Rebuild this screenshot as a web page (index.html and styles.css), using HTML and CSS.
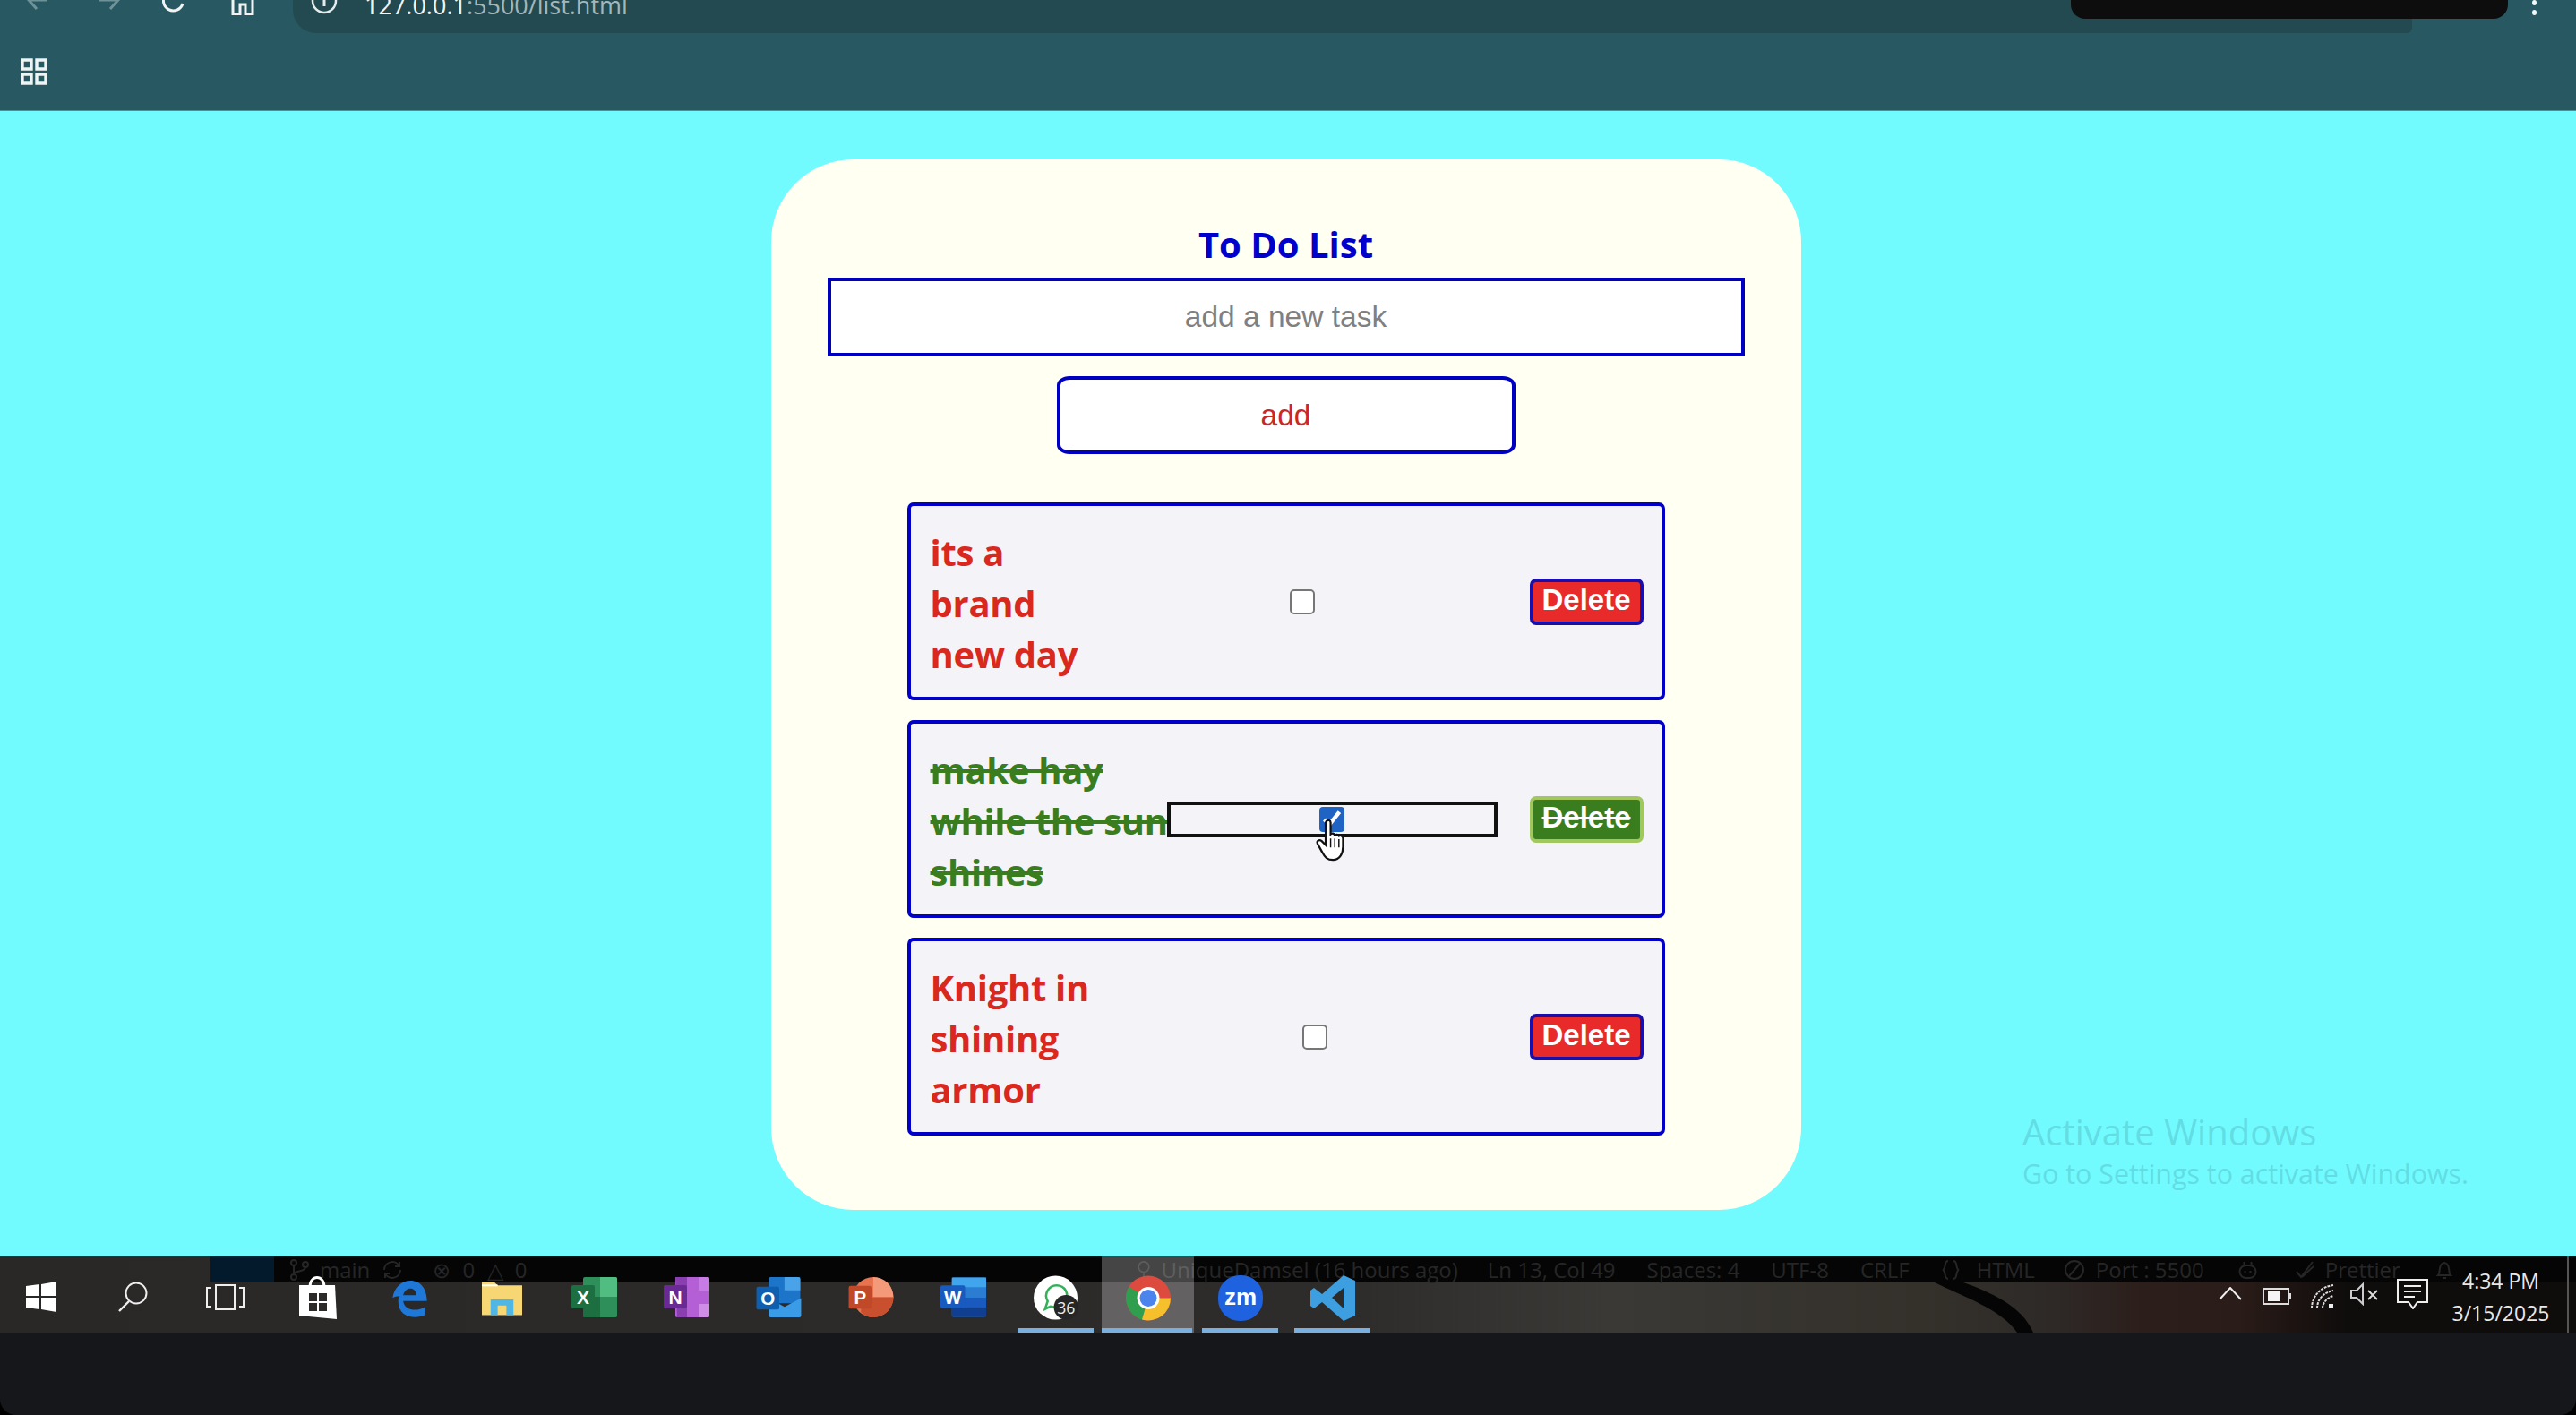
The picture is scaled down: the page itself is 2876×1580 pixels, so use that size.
FILE: index.html
```html
<!DOCTYPE html>
<html lang="en">
<head>
    <meta charset="UTF-8">
    <title>To Do List</title>
    <link rel="stylesheet" href="styles.css">
</head>
<body>
    <!-- Browser chrome, cut off at the top of the recording -->
    <header class="browser">
        <div class="toolbar">
            <svg class="nav-icon back" viewBox="0 0 26 30"><path d="M24 15H3M12 5L3 15l9 10" fill="none" stroke="#6f9298" stroke-width="3"/></svg>
            <svg class="nav-icon forward" viewBox="0 0 26 30"><path d="M2 15h21M14 5l9 10-9 10" fill="none" stroke="#6f9298" stroke-width="3"/></svg>
            <svg class="nav-icon reload" viewBox="0 0 26 30"><path d="M23 19a11 11 0 1 1-2-10" fill="none" stroke="#f0f4f4" stroke-width="3"/></svg>
            <svg class="nav-icon home" viewBox="0 0 26 30"><path d="M2 29V12L13 2l11 10v17h-8V18h-6v11z" fill="none" stroke="#f0f4f4" stroke-width="3"/></svg>
            <div class="address">
                <svg class="info" viewBox="0 0 30 30"><circle cx="15" cy="15" r="13" fill="none" stroke="#e4ecec" stroke-width="2.5"/><path d="M15 8v13" stroke="#e4ecec" stroke-width="3"/></svg>
                <span class="url">127.0.0.1<span class="url-dim">:5500/list.html</span></span>
            </div>
        </div>
        <div class="recording-pill"></div>
        <div class="menu-dots"><i></i><i></i></div>
        <div class="bookmarks">
            <svg class="apps" viewBox="0 0 30 30"><path d="M2 2h10v10H2zM18 2h10v10H18zM2 18h10v10H2zM18 18h10v10H18z" fill="none" stroke="#eef4f4" stroke-width="3.4"/></svg>
        </div>
    </header>

    <main class="page">
        <section class="card">
            <h2 class="title">To Do List</h2>
            <input class="new-task" type="text" placeholder="add a new task">
            <button class="add-btn">add</button>
            <ul class="tasks">
                <li class="task">
                    <span class="task-text">its a brand new day</span>
                    <input class="task-check" type="checkbox">
                    <button class="delete-btn">Delete</button>
                </li>
                <li class="task done">
                    <span class="task-text">make hay while the sun shines</span>
                    <input class="task-check focused" type="checkbox" checked>
                    <button class="delete-btn">Delete</button>
                    <svg class="cursor" viewBox="0 0 40 52"><path d="M14 3c2-2 5-1 5 2v14c2-2 4-1 5 1 2-1 4-1 5 1 2-1 5 0 5 3v10c0 8-4 16-12 16-7 0-10-3-13-9L3 30c-1-3 2-5 5-3l5 5V5z" fill="#fff" stroke="#111" stroke-width="2.4"/><path d="M19 24v11M24 24v11M29 25v10" stroke="#111" stroke-width="1.6"/></svg>
                </li>
                <li class="task">
                    <span class="task-text">Knight in shining armor</span>
                    <input class="task-check" type="checkbox">
                    <button class="delete-btn">Delete</button>
                </li>
            </ul>
        </section>
        <div class="activate">
            <div class="activate-big">Activate Windows</div>
            <div class="activate-small">Go to Settings to activate Windows.</div>
        </div>
    </main>

    <footer class="taskbar">
        <!-- wallpaper stroke behind the glass -->
        <svg class="wallpaper" viewBox="0 0 2876 85"><path d="M2160 29c30 15 75 30 92 56h18c-12-30-50-46-78-56z" fill="#050505"/></svg>
        <!-- VS Code status bar showing through the taskbar -->
        <div class="status-line">
            <span class="status-remote"></span>
            <svg class="st-ico st-branch" viewBox="0 0 24 24"><circle cx="6" cy="4" r="3"/><circle cx="6" cy="20" r="3"/><circle cx="19" cy="6" r="3"/><path d="M6 7v10M19 9c0 6-13 3-13 8"/></svg>
            <span class="st-main">main</span>
            <svg class="st-ico st-sync" viewBox="0 0 24 24"><path d="M21 12a9 9 0 0 1-17 4M3 12a9 9 0 0 1 17-4M20 3v5h-5M4 21v-5h5"/></svg>
            <span class="st-errors">&#8855; 0 &#9651; 0</span>
            <svg class="st-ico st-pin" viewBox="0 0 24 24"><circle cx="12" cy="8" r="7"/><path d="M12 15v8"/></svg>
            <span class="st-blame">UniqueDamsel (16 hours ago)</span>
            <span class="st-ln">Ln 13, Col 49</span>
            <span class="st-item">Spaces: 4</span>
            <span class="st-item">UTF-8</span>
            <span class="st-item">CRLF</span>
            <svg class="st-ico st-braces" viewBox="0 0 24 24"><path d="M9 2c-5 0-2 9-6 10 4 1 1 10 6 10M15 2c5 0 2 9 6 10-4 1-1 10-6 10"/></svg>
            <span class="st-html">HTML</span>
            <svg class="st-ico st-noport" viewBox="0 0 24 24"><circle cx="12" cy="12" r="10"/><path d="M6 19L18 5"/></svg>
            <span class="st-port">Port : 5500</span>
            <svg class="st-ico st-robot" viewBox="0 0 24 24"><rect x="3" y="7" width="18" height="14" rx="7"/><path d="M8 3v4M16 3v4M9 13v2M15 13v2"/></svg>
            <svg class="st-ico st-check" viewBox="0 0 24 24"><path d="M3 14l5 6L21 3M9 20L22 8"/></svg>
            <span class="st-prettier">Prettier</span>
            <svg class="st-ico st-bell" viewBox="0 0 24 24"><path d="M5 18c3-3 0-13 7-14 7 1 4 11 7 14zM10 21h4"/></svg>
        </div>
        <div class="slots">
            <div class="slot slot-start">
                <svg class="ico-start" viewBox="0 0 34 34"><path d="M0 5l15-2v13H0zM17 3l17-3v16H17zM0 18h15v13L0 29zM17 18h17v16l-17-3z" fill="#fff"/></svg>
            </div>
            <div class="slot">
                <svg class="ico-search" viewBox="0 0 35 34"><circle cx="21" cy="13" r="11.5" fill="none" stroke="#eee" stroke-width="2"/><path d="M13 22L2 33" stroke="#eee" stroke-width="2.4"/></svg>
            </div>
            <div class="slot">
                <svg class="ico-view" viewBox="0 0 43 29"><path d="M11 1h21v27H11z" fill="none" stroke="#eee" stroke-width="2"/><path d="M6 4H1v21h5M37 4h5v21h-5" fill="none" stroke="#eee" stroke-width="2"/></svg>
            </div>
            <div class="slot">
                <svg class="ico-store" viewBox="0 0 44 49"><path d="M13 12c0-14 16-14 16 0" fill="none" stroke="#fff" stroke-width="3"/><path d="M1 10h40l2 38L1 44z" fill="#fff"/><path d="M12 19h9v9h-9zM23 19h9v9h-9zM12 30h9v9h-9zM23 30h9v9h-9z" fill="#2c2a29"/></svg>
            </div>
            <div class="slot">
                <svg class="ico-app" viewBox="0 0 44 46"><path d="M1 22C3 9 12 1 23 1c12 0 20 10 20 25H14c1 11 16 14 27 7v10c-14 6-33 2-33-16 0-3 0-5 2-7-4 0-7 1-9 2zM14 19h16c0-11-14-11-16 0z" fill="#1f78d8"/></svg>
            </div>
            <div class="slot">
                <svg class="ico-app" viewBox="0 0 46 38"><path d="M0 0h14l4 4h28v34H0z" fill="#f7d774"/><path d="M0 4h18" stroke="#fff" stroke-width="2"/><path d="M10 38V20h26v18h-8V27H18v11z" fill="#4fb6e6"/></svg>
            </div>
            <div class="slot">
                <svg class="ico-office" viewBox="0 0 51 45"><rect x="13" width="38" height="45" rx="2" fill="#2f8f5b"/><path d="M32 0h17a2 2 0 0 1 2 2v20H32z" fill="#52bd80"/><path d="M13 22h19v23H15a2 2 0 0 1-2-2z" fill="#1d6f42"/><rect y="9" width="26" height="26" rx="2" fill="#1d6f42"/><text class="ico-letter" x="13" y="30">X</text></svg>
            </div>
            <div class="slot">
                <svg class="ico-office" viewBox="0 0 51 45"><rect x="13" width="38" height="45" rx="2" fill="#b45fd6"/><path d="M39 0h10a2 2 0 0 1 2 2v13H39z" fill="#c77be4"/><path d="M39 30h12v13a2 2 0 0 1-2 2H39z" fill="#d08de8"/><path d="M13 0h13v45H15z" fill="#8a3fb0"/><rect y="9" width="26" height="26" rx="2" fill="#6a2a94"/><text class="ico-letter" x="13" y="30">N</text></svg>
            </div>
            <div class="slot">
                <svg class="ico-office" viewBox="0 0 51 46"><rect x="14" width="36" height="30" rx="2" fill="#1c75c8"/><path d="M32 0h16a2 2 0 0 1 2 2v13H32z" fill="#4aa3e8"/><path d="M14 24l18 10 19-10v20a2 2 0 0 1-2 2H16a2 2 0 0 1-2-2z" fill="#3a9be6"/><rect y="11" width="26" height="26" rx="2" fill="#0f5fb0"/><text class="ico-letter" x="13" y="32">O</text></svg>
            </div>
            <div class="slot">
                <svg class="ico-office" viewBox="0 0 51 46"><circle cx="28" cy="23" r="23" fill="#e8734f"/><path d="M28 0a23 23 0 0 1 23 23H28z" fill="#f29a7a"/><path d="M28 23h23a23 23 0 0 1-23 23 20 20 0 0 1-14-6V23z" fill="#c9502e"/><rect y="10" width="26" height="26" rx="2" fill="#c0492a"/><text class="ico-letter" x="13" y="31">P</text></svg>
            </div>
            <div class="slot">
                <svg class="ico-office" viewBox="0 0 52 45"><rect x="13" width="39" height="45" rx="2" fill="#2b7cd3"/><path d="M13 0h39v11H13z" fill="#41a5ee"/><path d="M13 23h39v11H13z" fill="#185abd"/><path d="M13 34h39v9a2 2 0 0 1-2 2H13z" fill="#103f91"/><rect y="9" width="28" height="26" rx="2" fill="#185abd"/><text class="ico-letter" x="14" y="30">W</text></svg>
            </div>
            <div class="slot">
                <svg class="ico-round" viewBox="0 0 51 51"><circle cx="25" cy="25" r="25" fill="#fff"/><path d="M13 38l3-9c-5-9 2-18 10-18 10 0 15 10 10 18-4 6-11 8-17 6z" fill="none" stroke="#35b05a" stroke-width="2.6"/><circle cx="37" cy="36" r="14" fill="#262626"/><text class="ico-badge" x="37" y="43">36</text></svg>
            </div>
            <div class="slot slot-active">
                <svg class="ico-round" viewBox="0 0 50 50"><circle cx="25" cy="25" r="25" fill="#dd4b3e"/><path d="M25 25L3.4 12.5A25 25 0 0 0 18 49z" fill="#2f9e4f"/><path d="M25 25h25a25 25 0 0 1-32 24z" fill="#f6c02c"/><circle cx="25" cy="25" r="12.5" fill="#fff"/><circle cx="25" cy="25" r="9.5" fill="#4a84ec"/></svg>
            </div>
            <div class="slot">
                <svg class="ico-round" viewBox="0 0 50 51"><rect width="50" height="51" rx="24" fill="#1f62e0"/><text class="ico-zm" x="25" y="33">zm</text></svg>
            </div>
            <div class="slot">
                <svg class="ico-round" viewBox="0 0 50 51"><path d="M37 0l13 6v39l-13 6L13 30 4 37l-4-3v-17l4-3 9 7zM37 14L24 25l13 12z" fill="#3d9ee0" fill-rule="evenodd"/></svg>
            </div>
        </div>
        <div class="tray">
            <svg class="tray-chevron" viewBox="0 0 26 15"><path d="M1 14L13 1l12 13" fill="none" stroke="#eee" stroke-width="2"/></svg>
            <svg class="tray-battery" viewBox="0 0 32 19"><path d="M1 1h28v17H1z" fill="none" stroke="#ddd" stroke-width="2"/><path d="M6 4h14v11H6z" fill="#f4f4f4"/><path d="M30 6h2v7h-2z" fill="#ddd"/></svg>
            <svg class="tray-wifi" viewBox="0 0 26 27"><path d="M1 27C1 14 10 3 25 1M7 27C7 17 14 9 25 7M13 27c0-6 5-12 12-14" fill="none" stroke="#ddd" stroke-width="2" stroke-dasharray="3 1"/><path d="M20 22h5v5h-5z" fill="#eee"/></svg>
            <svg class="tray-sound" viewBox="0 0 32 26"><path d="M1 9h6l7-7v22l-7-7H1z" fill="none" stroke="#ccc" stroke-width="2"/><path d="M20 9l10 10M30 9L20 19" stroke="#ddd" stroke-width="2"/></svg>
            <svg class="tray-action" viewBox="0 0 35 34"><path d="M1 1h33v25H23l-5 7-5-7H1z" fill="none" stroke="#eee" stroke-width="2"/><path d="M8 8h19M8 14h19M8 20h12" stroke="#eee" stroke-width="2"/></svg>
            <div class="clock">
                <div>4:34 PM</div>
                <div>3/15/2025</div>
            </div>
        </div>
    </footer>
    <div class="below"></div>
</body>
</html>
```

FILE: styles.css
```css
* {
    box-sizing: border-box;
}
html, body {
    margin: 0;
    height: 1580px;
    overflow: hidden;
    background: #000;
}
body {
    display: flex;
    flex-direction: column;
    font-family: "Liberation Sans", Arial, sans-serif;
}

/* Browser chrome */
.browser {
    position: relative;
    flex: 0 0 124px;
    background: #285862;
    border-bottom: 1px solid #4f8f96;
    overflow: hidden;
}
.toolbar {
    display: flex;
    align-items: flex-end;
    height: 37px;
    padding-left: 29px;
}
.nav-icon {
    flex: none;
    width: 26px;
    height: 30px;
    margin-bottom: 22px;
}
.forward { margin-left: 54px; }
.reload { margin-left: 46px; }
.home { margin-left: 51px; margin-bottom: 20px; }
.address {
    display: flex;
    align-items: flex-end;
    flex: none;
    width: 2366px;
    height: 37px;
    margin-left: 43px;
    padding-left: 20px;
    background: #234a50;
    border-bottom-left-radius: 26px;
    border-bottom-right-radius: 6px;
}
.info {
    width: 30px;
    height: 30px;
    margin-bottom: 21px;
}
.url {
    margin-left: 30px;
    padding-bottom: 13px;
    font-family: "Open Sans", sans-serif;
    font-size: 27px;
    line-height: 36px;
    color: #f2f6f6;
    white-space: nowrap;
}
.url-dim { color: #a3b7ba; }
.recording-pill {
    position: absolute;
    left: 2312px;
    top: 0;
    width: 488px;
    height: 21px;
    background: #0d0d0d;
    border-radius: 0 0 16px 16px;
}
.menu-dots {
    position: absolute;
    left: 2827px;
    top: 0;
}
.menu-dots i {
    display: block;
    width: 5px;
    height: 6px;
    margin-bottom: 5px;
    border-radius: 50%;
    background: #f2f6f6;
}
.bookmarks {
    padding: 28px 0 0 23px;
}
.apps {
    display: block;
    width: 30px;
    height: 30px;
}

/* Page */
.page {
    position: relative;
    display: flex;
    justify-content: center;
    flex: 0 0 1279px;
    padding: 54px 5px 0 0;
    background: #72fbff;
}
.card {
    display: flex;
    flex-direction: column;
    align-items: center;
    width: 1150px;
    height: 1173px;
    padding-top: 68px;
    background: #fffff2;
    border-radius: 92px;
}
.title {
    margin: 0 0 10px;
    font-family: "Open Sans", sans-serif;
    font-size: 40px;
    font-weight: 700;
    line-height: 54px;
    color: #0000cd;
}
.new-task {
    width: 1024px;
    height: 88px;
    border: 4px solid #0000c0;
    background: #fff;
    font-family: "Liberation Sans", Arial, sans-serif;
    font-size: 33.5px;
    text-align: center;
    outline: none;
}
.new-task::placeholder {
    color: #808080;
}
.add-btn {
    width: 512px;
    height: 87px;
    margin-top: 22px;
    border: 4px solid #0000c0;
    border-radius: 14px / 10px;
    background: #fff;
    font-family: "Liberation Sans", Arial, sans-serif;
    font-size: 33.5px;
    color: #c82828;
}
.tasks {
    display: flex;
    flex-direction: column;
    gap: 22px;
    width: 846px;
    margin: 54px 0 0;
    padding: 0;
    list-style: none;
}
.task {
    position: relative;
    display: flex;
    align-items: center;
    height: 221px;
    padding: 0 20px 0 22px;
    background: #f4f4f8;
    border: 4px solid #0000c8;
    border-radius: 7px;
}
.task-text {
    padding-top: 3px;
    font-family: "Open Sans", sans-serif;
    font-size: 40px;
    font-weight: 700;
    line-height: 57px;
    letter-spacing: -0.3px;
    color: #d9281e;
}
.task-check {
    zoom: 2;
    width: 100%;
    height: 14px;
    margin: 0;
    accent-color: #1f63c4;
}
.task-check.focused {
    outline: 2px solid #111;
    outline-offset: 1px;
    border-radius: 3px;
}
.delete-btn {
    flex: none;
    width: 127px;
    height: 52px;
    margin-left: 42px;
    padding: 0 0 4px;
    border: 4px solid #1a0fa8;
    border-radius: 7px;
    background: #e82a2a;
    font-family: "Liberation Sans", Arial, sans-serif;
    font-size: 33px;
    font-weight: 700;
    color: #fff;
}
.done .task-text {
    color: #3a7d1e;
    text-decoration: line-through;
}
.done .delete-btn {
    border-color: #a3c75f;
    background: #3a7d1e;
    text-decoration: line-through;
}
.cursor {
    position: absolute;
    left: 451px;
    top: 106px;
    width: 37px;
    height: 48px;
}
.activate {
    position: absolute;
    left: 2258px;
    top: 1114px;
    font-family: "Open Sans", sans-serif;
    color: #62dde3;
    white-space: nowrap;
}
.activate-big {
    font-size: 40px;
    line-height: 52px;
}
.activate-small {
    font-size: 30.4px;
    line-height: 42px;
}

/* Taskbar */
.taskbar {
    position: relative;
    display: flex;
    align-items: stretch;
    flex: 0 0 85px;
    background: linear-gradient(to right, #2a2827 0, #2e2c2b 1500px, #3a3936 1800px, #34302a 2150px, #2e2a28 2280px, #2c1e1a 2400px, #2a1c18 2500px, #0f0c0c 2620px);
}
.wallpaper {
    position: absolute;
    left: 0;
    top: 0;
    width: 2876px;
    height: 85px;
}
.status-line {
    position: absolute;
    left: 235px;
    right: 0;
    top: 0;
    display: flex;
    align-items: center;
    height: 29px;
    background: #050505;
    font-family: "Open Sans", sans-serif;
    font-size: 24px;
    color: #262626;
    white-space: nowrap;
}
.status-remote {
    align-self: stretch;
    width: 71px;
    background: #021a2c;
}
.st-ico {
    flex: none;
    width: 24px;
    height: 24px;
    fill: none;
    stroke: #262626;
    stroke-width: 2;
}
.st-branch { margin-left: 16px; }
.st-main { margin-left: 11px; }
.st-sync { margin-left: 11px; width: 28px; }
.st-errors { margin-left: 31px; word-spacing: 7px; }
.st-pin { margin-left: 678px; width: 20px; }
.st-blame { margin-left: 10px; }
.st-ln { margin-left: 33px; }
.st-item { margin-left: 35px; }
.st-braces { margin-left: 34px; }
.st-html { margin-left: 17px; }
.st-noport { margin-left: 32px; }
.st-port { margin-left: 12px; }
.st-robot { margin-left: 33px; width: 31px; }
.st-check { margin-left: 34px; width: 28px; }
.st-prettier { margin-left: 9px; }
.st-bell { margin-left: 37px; }
.slots {
    position: relative;
    display: flex;
}
.slot {
    position: relative;
    display: flex;
    align-items: center;
    justify-content: center;
    flex: none;
    width: 103px;
}
.slot-start {
    width: 97px;
    padding-right: 5px;
}
.slot:nth-child(n+12)::after {
    content: "";
    position: absolute;
    left: 9px;
    right: 9px;
    bottom: 0;
    height: 5px;
    background: #7ab0e0;
}
.slot-active {
    background: rgba(255, 255, 255, 0.26);
}
.slot-active::after {
    left: 0 !important;
    right: 2px !important;
}
.ico-start { width: 34px; height: 34px; margin-top: 5px; }
.ico-search { width: 35px; height: 34px; margin-top: 5px; }
.ico-view { width: 43px; height: 29px; margin-top: 5px; }
.ico-store { width: 44px; height: 49px; margin-top: 8px; }
.ico-app { width: 45px; height: 42px; margin-top: 8px; }
.ico-office { width: 51px; height: 45px; margin-top: 6px; }
.ico-round { width: 50px; height: 51px; margin-top: 8px; }
.ico-letter {
    font-family: "Liberation Sans", Arial, sans-serif;
    font-size: 21px;
    font-weight: 700;
    fill: #fff;
    text-anchor: middle;
}
.ico-badge {
    font-family: "Open Sans", sans-serif;
    font-size: 18px;
    fill: #eee;
    text-anchor: middle;
}
.ico-zm {
    font-family: "Liberation Sans", Arial, sans-serif;
    font-size: 26px;
    font-weight: 700;
    fill: #fff;
    text-anchor: middle;
}
.tray {
    position: absolute;
    left: 2477px;
    right: 0;
    top: 0;
    bottom: 0;
    display: flex;
    border-right: 2px solid #555;
    margin-right: 8px;
}
.tray-chevron { width: 26px; height: 15px; margin: 34px 0 0 0; }
.tray-battery { width: 32px; height: 19px; margin: 35px 0 0 23px; }
.tray-wifi { width: 26px; height: 27px; margin: 31px 0 0 22px; }
.tray-sound { width: 32px; height: 26px; margin: 29px 0 0 18px; }
.tray-action { width: 35px; height: 34px; margin: 25px 0 0 20px; }
.clock {
    width: 118px;
    margin: 9px 0 0 22px;
    font-family: "Open Sans", sans-serif;
    font-size: 23px;
    line-height: 36px;
    text-align: center;
    color: #e8e8e8;
}
.below {
    flex: 1;
    background: #16171b;
    border-radius: 0 0 18px 18px;
}
```
